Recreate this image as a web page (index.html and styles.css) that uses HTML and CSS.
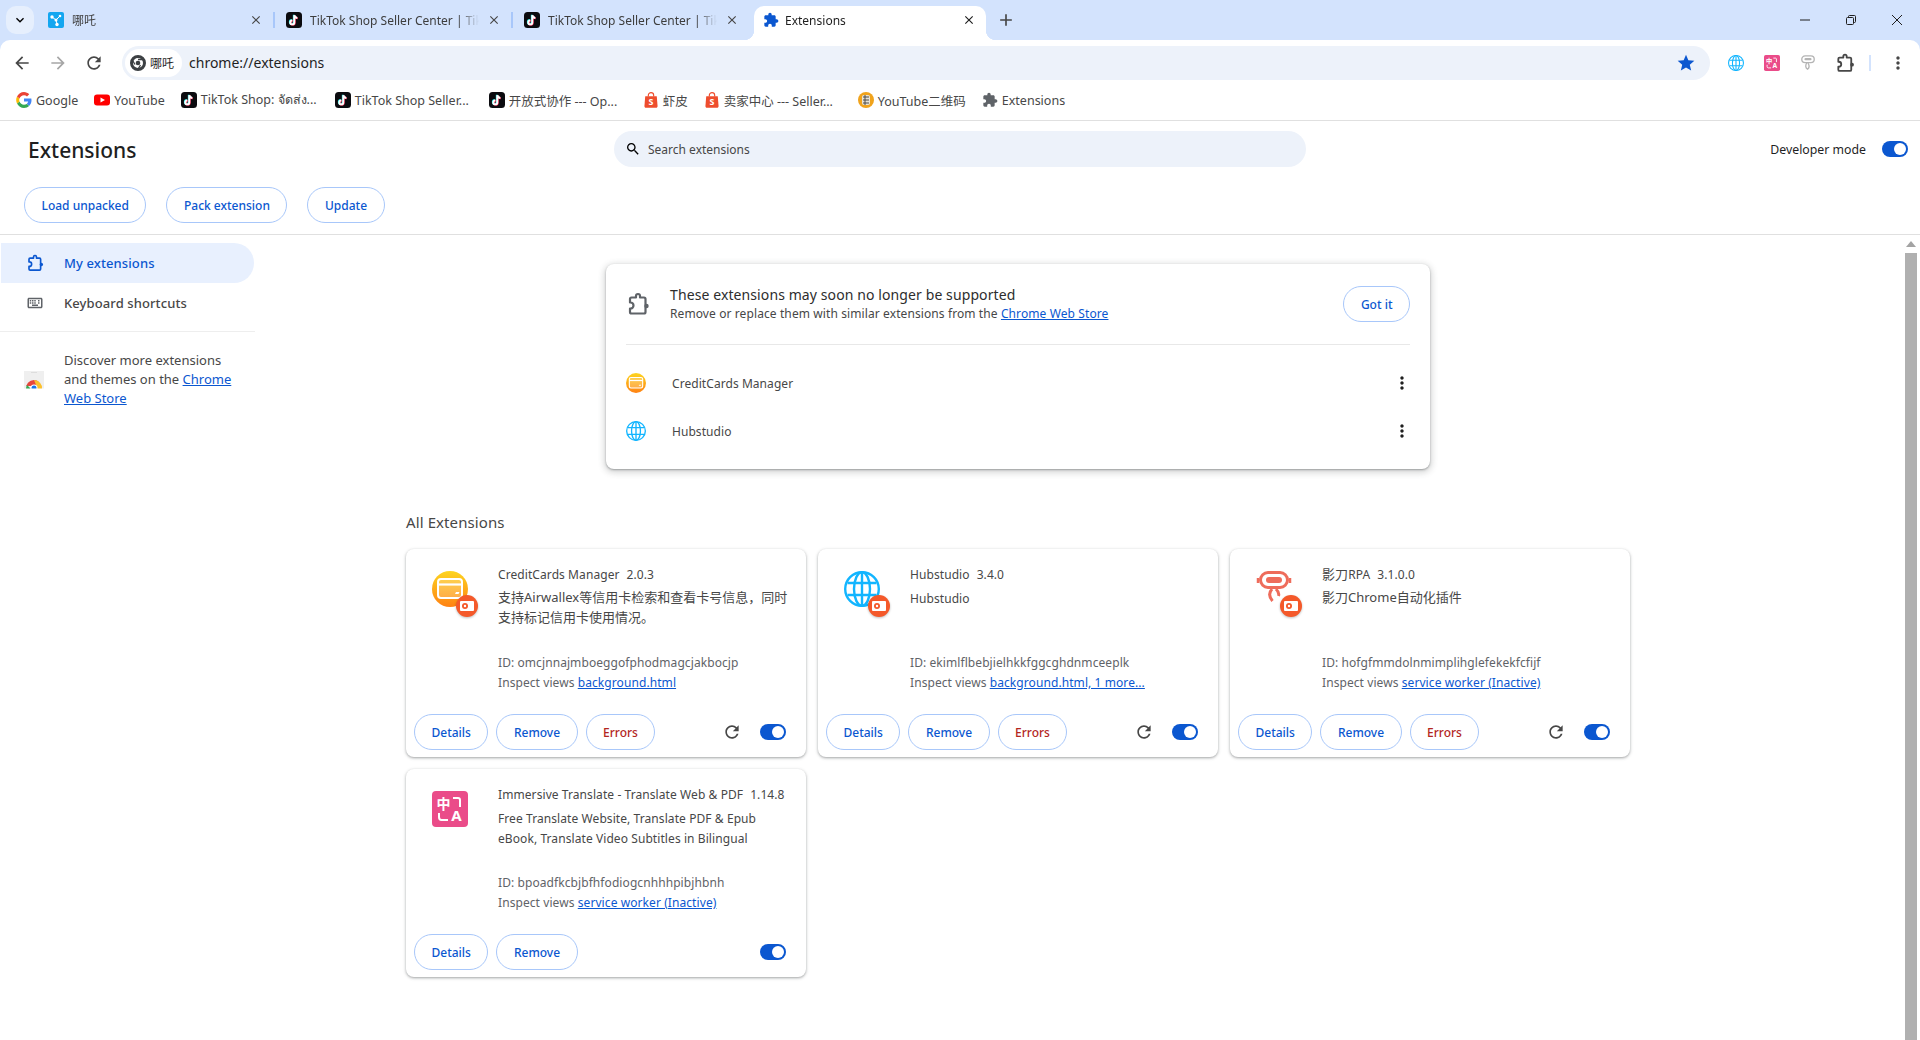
FILE: index.html
```html
<!DOCTYPE html>
<html lang="en">
<head>
  <meta charset="UTF-8">
  <title>Extensions</title>
  <link rel="stylesheet" href="styles.css">
</head>
<body>
  <svg class="defs" width="0" height="0">
    <defs>
      <symbol id="i-puzzle" viewBox="0 0 24 24"><path d="M20.5 11H19V7c0-1.1-.9-2-2-2h-4V3.5C13 2.12 11.88 1 10.5 1S8 2.12 8 3.5V5H4c-1.1 0-1.99.9-1.99 2v3.8H3.5c1.49 0 2.7 1.21 2.7 2.7s-1.21 2.7-2.7 2.7H2V20c0 1.1.9 2 2 2h3.8v-1.5c0-1.49 1.21-2.7 2.7-2.7 1.49 0 2.7 1.21 2.7 2.7V22H17c1.1 0 2-.9 2-2v-4h1.5c1.38 0 2.5-1.12 2.5-2.5S21.88 11 20.5 11z"/></symbol>
      <symbol id="i-outline-puzzle" viewBox="0 0 24 24"><path fill="none" stroke="currentColor" stroke-width="2.2" stroke-linejoin="round" d="M19.5 11.5V7c0-.8-.7-1.5-1.500-1.500h-4V4c0-1.100-.9-2-2-2s-2 .9-2 2v1.500H5.500C4.700 5.500 4 6.200 4 7v3.500h.5c1.600 0 3 1.300 3 3s-1.400 3-3 3H4V20c0 .8.7 1.500 1.500 1.500H18c.8 0 1.500-.7 1.500-1.500v-3.500z"/><circle cx="20.500" cy="14" r="2.200"/></symbol>
      <symbol id="i-close" viewBox="0 0 24 24"><path d="M19 6.410L17.590 5 12 10.590 6.410 5 5 6.410 10.590 12 5 17.590 6.410 19 12 13.410 17.590 19 19 17.590 13.410 12z"/></symbol>
      <symbol id="i-reload" viewBox="0 0 24 24"><path d="M17.650 6.350C16.200 4.900 14.210 4 12 4c-4.420 0-7.990 3.580-7.990 8s3.570 8 7.990 8c3.730 0 6.840-2.550 7.730-6h-2.080c-.82 2.330-3.040 4-5.650 4-3.310 0-6-2.690-6-6s2.690-6 6-6c1.660 0 3.140.69 4.220 1.780L13 11h7V4l-2.350 2.350z"/></symbol>
      <symbol id="i-more" viewBox="0 0 24 24"><path d="M12 8c1.100 0 2-.9 2-2s-.9-2-2-2-2 .9-2 2 .9 2 2 2zm0 2c-1.100 0-2 .9-2 2s.9 2 2 2 2-.9 2-2-.9-2-2-2zm0 6c-1.100 0-2 .9-2 2s.9 2 2 2 2-.9 2-2-.9-2-2-2z"/></symbol>
      <symbol id="i-tiktok" viewBox="0 0 16 16">
        <rect width="16" height="16" rx="3.500" fill="#0b0b0f"/>
        <g fill="none" stroke-width="1.900">
          <path stroke="#25f4ee" d="M7.800 2.800v7.200a2 2 0 1 1-2-2M7.800 2.800c.2 1.500 1.300 2.600 3 2.800"/>
          <path stroke="#fe2c55" d="M8.800 3.600v7.200a2 2 0 1 1-2-2M8.800 3.600c.2 1.500 1.300 2.600 3 2.800"/>
          <path stroke="#fff" d="M8.300 3.200v7.200a2 2 0 1 1-2-2M8.300 3.200c.2 1.500 1.300 2.600 3 2.800"/>
        </g>
      </symbol>
      <symbol id="i-shopee" viewBox="0 0 16 18">
        <path fill="none" stroke="#ee4d2d" stroke-width="1.300" d="M5 5V3.700a3 3 0 0 1 6 0V5"/>
        <path fill="#ee4d2d" d="M1.500 4.800h13l.9 11.300c0 1-.7 1.700-1.600 1.700H2.200c-.9 0-1.600-.7-1.600-1.700z"/>
        <text x="8" y="15" text-anchor="middle" font-size="10" font-weight="700" fill="#fff" font-family="Noto Sans, sans-serif">S</text>
      </symbol>
      <symbol id="i-globe" viewBox="0 0 36 36">
        <g fill="none" stroke="#12b5ff" stroke-width="2.400">
          <circle cx="18" cy="18" r="16.800"/>
          <ellipse cx="18" cy="18" rx="8" ry="16.800"/>
          <path d="M18 1.200v33.600M3.500 12h29M3.500 24h29"/>
        </g>
      </symbol>
      <symbol id="i-card" viewBox="0 0 36 36">
        <defs><linearGradient id="g-card" x1="0" y1="0" x2="0" y2="1"><stop offset="0" stop-color="#fdd520"/><stop offset="1" stop-color="#ff8112"/></linearGradient></defs>
        <circle cx="18" cy="18" r="18" fill="url(#g-card)"/>
        <rect x="6" y="8" width="24" height="19" rx="3" fill="#ffffff" fill-opacity=".22" stroke="#fff" stroke-width="2"/>
        <path d="M6 13.500h24" stroke="#fff" stroke-width="2.200"/>
        <path d="M23 23l1-2h3.500l-1 2z" fill="#fff"/>
      </symbol>
      <symbol id="i-rpa" viewBox="0 0 36 36">
        <g fill="none" stroke="#ee6c5b">
          <rect x="4.500" y="1.500" width="27" height="15" rx="7.500" stroke-width="3"/>
          <rect x="10" y="6" width="16" height="6" rx="3" fill="#ee6c5b" stroke-width="0"/>
          <path stroke-width="3" d="M16 18c-3.500 4-3 8 .5 12M20 18c2 2 3.500 4 2.500 7"/>
          <path stroke-width="2.500" d="M2 7v5M34 7v5"/>
        </g>
      </symbol>
      <symbol id="i-rpa-grey" viewBox="0 0 36 36">
        <g fill="none" stroke="#b4b4b4">
          <rect x="4" y="2" width="28" height="15" rx="7.500" stroke-width="3"/>
          <rect x="10" y="7" width="16" height="5" rx="2.500" fill="#b4b4b4" stroke-width="0"/>
          <path stroke-width="3" d="M15 18c-3 5-3 11 2 14 4-3 4-9 1-14"/>
        </g>
      </symbol>
      <symbol id="i-translate" viewBox="0 0 36 36">
        <rect width="36" height="36" rx="4" fill="#ea4c89"/>
        <text x="11.500" y="18" text-anchor="middle" font-size="14" font-weight="700" fill="#fff" font-family="Noto Sans CJK SC, sans-serif">中</text>
        <text x="24.500" y="30" text-anchor="middle" font-size="15" font-weight="700" fill="#fff" font-family="Noto Sans, sans-serif">A</text>
        <path d="M21 7h5c1 0 2 1 2 2v7M7 22v4c0 1.500 1 3 2.500 3H16" fill="none" stroke="#fff" stroke-width="2"/>
      </symbol>
      <symbol id="i-badge" viewBox="0 0 22 22">
        <circle cx="11" cy="11" r="11" fill="#f4592a"/>
        <rect x="4" y="6" width="14" height="10" rx="1" fill="#fff"/>
        <circle cx="9" cy="11" r="3" fill="#f4592a"/>
        <circle cx="9" cy="11" r="1.200" fill="#fff"/>
      </symbol>
    </defs>
  </svg>

  <div class="tabstrip">
    <div class="tab-search"><svg class="ico-16" viewBox="0 0 24 24"><path d="M16.590 8.590L12 13.170 7.410 8.590 6 10l6 6 6-6z"/></svg></div>
    <div class="tab sep">
      <svg class="favicon" viewBox="0 0 16 16">
        <rect width="16" height="16" rx="2" fill="#13a6f0"/>
        <path d="M4 5l4 3 4-4M8 8l1 4" stroke="#fff" fill="none"/>
        <circle cx="4" cy="5" r="1.700" fill="#fff"/><circle cx="12" cy="4" r="1.300" fill="#fff"/><circle cx="8" cy="8" r="1.500" fill="#fff"/><circle cx="9" cy="12.500" r="1.700" fill="#fff"/>
      </svg>
      <span class="tab-title">哪吒</span>
      <svg class="tab-close"><use href="#i-close"/></svg>
    </div>
    <div class="tab sep">
      <svg class="favicon"><use href="#i-tiktok"/></svg>
      <span class="tab-title">TikTok Shop Seller Center | TikTok</span>
      <svg class="tab-close"><use href="#i-close"/></svg>
    </div>
    <div class="tab">
      <svg class="favicon"><use href="#i-tiktok"/></svg>
      <span class="tab-title">TikTok Shop Seller Center | TikTok</span>
      <svg class="tab-close"><use href="#i-close"/></svg>
    </div>
    <div class="tab tab-active">
      <svg class="favicon fav-blue"><use href="#i-puzzle"/></svg>
      <span class="tab-title">Extensions</span>
      <svg class="tab-close"><use href="#i-close"/></svg>
    </div>
    <div class="tab-new"><svg class="ico-20" viewBox="0 0 24 24"><path d="M19 13h-6v6h-2v-6H5v-2h6V5h2v6h6v2z"/></svg></div>
    <div class="win-controls">
      <div class="win-btn"><svg width="12" height="12" viewBox="0 0 12 12"><path d="M1 6h10" stroke="#1f1f1f"/></svg></div>
      <div class="win-btn"><svg width="12" height="12" viewBox="0 0 12 12" fill="none" stroke="#1f1f1f"><rect x="1.500" y="3.500" width="7" height="7" rx="1"/><path d="M3.500 3.500V2.500a1 1 0 0 1 1-1h5a1 1 0 0 1 1 1v5a1 1 0 0 1-1 1h-1"/></svg></div>
      <div class="win-btn"><svg width="12" height="12" viewBox="0 0 12 12"><path d="M1 1l10 10M11 1L1 11" stroke="#1f1f1f"/></svg></div>
    </div>
  </div>

  <div class="toolbar">
    <div class="nav-btns">
      <svg class="nav-ico" viewBox="0 0 24 24"><path d="M20 11H7.830l5.590-5.590L12 4l-8 8 8 8 1.410-1.410L7.830 13H20v-2z"/></svg>
      <svg class="nav-ico nav-off" viewBox="0 0 24 24"><path d="M12 4l-1.410 1.410L16.170 11H4v2h12.170l-5.580 5.590L12 20l8-8z"/></svg>
      <svg class="nav-ico"><use href="#i-reload"/></svg>
    </div>
    <div class="omnibox">
      <div class="chip">
        <svg width="16" height="16" viewBox="0 0 16 16"><circle cx="8" cy="8" r="6.500" fill="none" stroke="#3c4043" stroke-width="3"/><circle cx="8" cy="8" r="2.300" fill="#3c4043"/><path d="M8 4.500h6M5 9.500L2 4.500M10.500 10l-3 5" stroke="#3c4043" stroke-width="1.300"/></svg>
        <span>哪吒</span>
      </div>
      <span class="url">chrome://extensions</span>
      <svg class="star" viewBox="0 0 24 24"><path d="M12 17.270L18.180 21l-1.640-7.030L22 9.240l-7.190-.61L12 2 9.190 8.630 2 9.240l5.460 4.730L5.820 21z"/></svg>
    </div>
    <div class="actions">
      <svg class="act-ico"><use href="#i-globe"/></svg>
      <svg class="act-ico"><use href="#i-translate"/></svg>
      <svg class="act-ico"><use href="#i-rpa-grey"/></svg>
      <svg class="act-ico act-puzzle"><use href="#i-outline-puzzle"/></svg>
      <span class="act-sep"></span>
      <svg class="act-more"><use href="#i-more"/></svg>
    </div>
  </div>

  <div class="bookmarks">
    <a class="bm">
      <svg class="bm-ico" viewBox="0 0 16 16">
        <path d="M15.500 8.200c0-.6-.1-1.100-.2-1.600H8v3h4.200c-.2 1-.7 1.800-1.500 2.400l2.400 1.900c1.500-1.300 2.400-3.300 2.400-5.700z" fill="#4285f4"/>
        <path d="M8 16c2.100 0 3.900-.7 5.100-1.900L10.700 12c-.7.500-1.600.8-2.700.8-2.100 0-3.800-1.400-4.500-3.300L1 11.500C2.400 14.200 5 16 8 16z" fill="#34a853"/>
        <path d="M3.500 9.500c-.4-1-.4-2.100 0-3L1 4.500c-1.100 2.200-1.100 4.800 0 7z" fill="#fbbc05"/>
        <path d="M8 3.200c1.200 0 2.200.4 3 1.200l2.200-2.200C11.900 1 10.100 0 8 0 5 0 2.400 1.800 1 4.500l2.500 2C4.200 4.600 5.900 3.200 8 3.200z" fill="#ea4335"/>
      </svg>
      <span>Google</span>
    </a>
    <a class="bm">
      <svg class="bm-ico" viewBox="0 0 16 16"><rect y="2.500" width="16" height="11" rx="3" fill="#f00"/><path d="M6.500 5.500v5L11 8z" fill="#fff"/></svg>
      <span>YouTube</span>
    </a>
    <a class="bm bm-long"><svg class="bm-ico"><use href="#i-tiktok"/></svg><span>TikTok Shop: จัดส่ง...</span></a>
    <a class="bm bm-long"><svg class="bm-ico"><use href="#i-tiktok"/></svg><span>TikTok Shop Seller...</span></a>
    <a class="bm bm-long"><svg class="bm-ico"><use href="#i-tiktok"/></svg><span>开放式协作 --- Op...</span></a>
    <a class="bm"><svg class="bm-ico"><use href="#i-shopee"/></svg><span>虾皮</span></a>
    <a class="bm bm-long"><svg class="bm-ico"><use href="#i-shopee"/></svg><span>卖家中心 --- Seller...</span></a>
    <a class="bm">
      <svg class="bm-ico" viewBox="0 0 16 16"><circle cx="8" cy="8" r="8" fill="#f0a31c"/><rect x="4" y="3" width="8" height="10" rx="2" fill="#e7e3d6"/><path d="M5 5h6M5 8h6M5 11h6M7 3v10" stroke="#4a4a4a"/></svg>
      <span>YouTube二维码</span>
    </a>
    <a class="bm"><svg class="bm-ico bm-grey"><use href="#i-puzzle"/></svg><span>Extensions</span></a>
  </div>

  <header class="ext-head">
    <div class="head-top">
      <h1>Extensions</h1>
      <div class="search">
        <svg class="ico-16" viewBox="0 0 24 24"><path d="M15.500 14h-.79l-.28-.27C15.410 12.590 16 11.110 16 9.500 16 5.910 13.090 3 9.500 3S3 5.910 3 9.500 5.910 16 9.500 16c1.610 0 3.090-.59 4.230-1.570l.27.28v.79l5 4.990L20.490 19l-4.990-5zm-6 0C7.010 14 5 11.990 5 9.500S7.010 5 9.500 5 14 7.010 14 9.500 11.990 14 9.500 14z"/></svg>
        <span>Search extensions</span>
      </div>
      <div class="devmode">
        <span>Developer mode</span>
        <span class="toggle"></span>
      </div>
    </div>
    <div class="head-btns">
      <a class="btn">Load unpacked</a>
      <a class="btn">Pack extension</a>
      <a class="btn">Update</a>
    </div>
  </header>

  <div class="page">
    <nav class="sidebar">
      <a class="side-item side-active"><svg class="side-ico"><use href="#i-outline-puzzle"/></svg>My extensions</a>
      <a class="side-item"><svg class="side-ico side-kbd" viewBox="0 0 24 24"><path d="M20 7v10H4V7h16m0-2H4c-1.100 0-1.990.9-1.990 2L2 17c0 1.100.9 2 2 2h16c1.100 0 2-.9 2-2V7c0-1.100-.9-2-2-2zm-9 3h2v2h-2zm0 3h2v2h-2zM8 8h2v2H8zm0 3h2v2H8zm-3 0h2v2H5zm0-3h2v2H5zm3 6h8v2H8zm8-3h2v2h-2zm0-3h2v2h-2z"/></svg>Keyboard shortcuts</a>
      <div class="side-promo">
        <svg class="promo-ico" viewBox="0 0 20 18">
          <rect width="20" height="18" fill="#efefef"/>
          <rect x="7" y="1" width="6" height="1" fill="#ddd"/>
          <path d="M2 18a8 8 0 0 1 8-9 8 8 0 0 1 5 2l-3 4H2z" fill="#e8453c"/>
          <path d="M10 9a8 8 0 0 1 8 9h-5l-1-4z" fill="#fbc02d"/>
          <path d="M2 18a8 8 0 0 1 1-4l4 4z" fill="#34a853"/>
          <circle cx="10" cy="17" r="3.500" fill="#fff"/><circle cx="10" cy="17" r="2.500" fill="#1a73e8"/>
          <rect y="17.500" width="20" height=".5" fill="#fff"/>
        </svg>
        <p>Discover more extensions and themes on the <a class="link">Chrome Web Store</a></p>
      </div>
    </nav>

    <main class="main">
      <section class="warn-card">
        <div class="warn-top">
          <svg class="warn-ico"><use href="#i-outline-puzzle"/></svg>
          <div class="warn-text">
            <div class="warn-title">These extensions may soon no longer be supported</div>
            <div class="warn-sub">Remove or replace them with similar extensions from the <a class="link">Chrome Web Store</a></div>
          </div>
          <a class="btn btn-got">Got it</a>
        </div>
        <div class="warn-list">
          <div class="warn-row">
            <svg class="warn-ext"><use href="#i-card"/></svg>
            <span>CreditCards Manager</span>
            <svg class="warn-more"><use href="#i-more"/></svg>
          </div>
          <div class="warn-row">
            <svg class="warn-ext"><use href="#i-globe"/></svg>
            <span>Hubstudio</span>
            <svg class="warn-more"><use href="#i-more"/></svg>
          </div>
        </div>
      </section>

      <h2 class="all-title">All Extensions</h2>

      <div class="ext-grid">
        <article class="ext-card">
          <div class="ext-body">
            <div class="ext-icon"><svg class="ext-img"><use href="#i-card"/></svg><svg class="ext-badge"><use href="#i-badge"/></svg></div>
            <div class="ext-info">
              <div class="ext-name">CreditCards Manager<span class="ext-ver">2.0.3</span></div>
              <div class="ext-desc ext-desc-cjk">支持Airwallex等信用卡检索和查看卡号信息，同时支持标记信用卡使用情况。</div>
              <div class="ext-id">ID: omcjnnajmboeggofphodmagcjakbocjp</div>
              <div class="ext-views">Inspect views <a class="link">background.html</a></div>
            </div>
          </div>
          <div class="ext-foot">
            <a class="btn">Details</a><a class="btn">Remove</a><a class="btn btn-err">Errors</a>
            <svg class="ext-reload"><use href="#i-reload"/></svg>
            <span class="toggle"></span>
          </div>
        </article>

        <article class="ext-card">
          <div class="ext-body">
            <div class="ext-icon"><svg class="ext-img"><use href="#i-globe"/></svg><svg class="ext-badge"><use href="#i-badge"/></svg></div>
            <div class="ext-info">
              <div class="ext-name">Hubstudio<span class="ext-ver">3.4.0</span></div>
              <div class="ext-desc">Hubstudio</div>
              <div class="ext-id">ID: ekimlflbebjielhkkfggcghdnmceeplk</div>
              <div class="ext-views">Inspect views <a class="link">background.html, 1 more...</a></div>
            </div>
          </div>
          <div class="ext-foot">
            <a class="btn">Details</a><a class="btn">Remove</a><a class="btn btn-err">Errors</a>
            <svg class="ext-reload"><use href="#i-reload"/></svg>
            <span class="toggle"></span>
          </div>
        </article>

        <article class="ext-card">
          <div class="ext-body">
            <div class="ext-icon"><svg class="ext-img"><use href="#i-rpa"/></svg><svg class="ext-badge"><use href="#i-badge"/></svg></div>
            <div class="ext-info">
              <div class="ext-name"><span class="cjk">影刀</span>RPA<span class="ext-ver">3.1.0.0</span></div>
              <div class="ext-desc ext-desc-cjk">影刀Chrome自动化插件</div>
              <div class="ext-id">ID: hofgfmmdolnmimplihglefekekfcfijf</div>
              <div class="ext-views">Inspect views <a class="link">service worker (Inactive)</a></div>
            </div>
          </div>
          <div class="ext-foot">
            <a class="btn">Details</a><a class="btn">Remove</a><a class="btn btn-err">Errors</a>
            <svg class="ext-reload"><use href="#i-reload"/></svg>
            <span class="toggle"></span>
          </div>
        </article>

        <article class="ext-card">
          <div class="ext-body">
            <div class="ext-icon"><svg class="ext-img"><use href="#i-translate"/></svg></div>
            <div class="ext-info">
              <div class="ext-name">Immersive Translate - Translate Web &amp; PDF<span class="ext-ver">1.14.8</span></div>
              <div class="ext-desc">Free Translate Website, Translate PDF &amp; Epub eBook, Translate Video Subtitles in Bilingual</div>
              <div class="ext-id">ID: bpoadfkcbjbfhfodiogcnhhhpibjhbnh</div>
              <div class="ext-views">Inspect views <a class="link">service worker (Inactive)</a></div>
            </div>
          </div>
          <div class="ext-foot">
            <a class="btn">Details</a><a class="btn">Remove</a>
            <span class="toggle toggle-end"></span>
          </div>
        </article>
      </div>
    </main>

    <div class="scrollbar">
      <span class="scroll-up"></span>
      <span class="scroll-thumb"></span>
    </div>
  </div>
</body>
</html>
```

FILE: styles.css
```css
html, body {
    margin: 0;
    height: 100%;
    overflow: hidden;
}

body {
    display: flex;
    flex-direction: column;
    background: #d3e3fd;
    color: #1f1f1f;
    font-family: "Noto Sans", "Noto Sans CJK SC", sans-serif;
    font-size: 13px;
}

svg {
    flex: none;
    display: block;
}

.defs {
    position: absolute;
}

.ico-16 {
    width: 16px;
    height: 16px;
}

.ico-20 {
    width: 20px;
    height: 20px;
    fill: #474747;
}

/* tab strip */
.tabstrip {
    display: flex;
    align-items: flex-end;
    height: 40px;
    flex: none;
    padding-left: 6px;
}

.tab-search {
    display: flex;
    align-items: center;
    justify-content: center;
    width: 28px;
    height: 28px;
    margin: 0 2px 6px 0;
    border-radius: 10px;
    background: #e6effd;
}

.tab {
    position: relative;
    display: flex;
    align-items: center;
    width: 238px;
    height: 34px;
    box-sizing: border-box;
    padding: 0 11px 6px 12px;
    font-size: 12px;
    color: #3d3d3d;
}

.sep::after {
    content: "";
    position: absolute;
    right: -1px;
    top: 6px;
    width: 2px;
    height: 16px;
    background: #a8c7fa;
}

.favicon {
    width: 16px;
    height: 16px;
    margin-right: 8px;
}

.tab-title {
    flex: 1;
    overflow: hidden;
    white-space: nowrap;
    -webkit-mask-image: linear-gradient(90deg, #000 88%, transparent);
    mask-image: linear-gradient(90deg, #000 88%, transparent);
}

.tab-close {
    width: 14px;
    height: 14px;
    margin-left: 8px;
    fill: #474747;
}

.tab-active {
    width: 232px;
    margin-left: 4px;
    padding: 0 9px 6px;
    background: #fff;
    border-radius: 10px 10px 0 0;
    color: #1f1f1f;
}

.tab-active .tab-close {
    fill: #1f1f1f;
    margin-right: 1px;
}

.tab-active::before,
.tab-active::after {
    content: "";
    position: absolute;
    bottom: 0;
    width: 10px;
    height: 10px;
}

.tab-active::before {
    left: -10px;
    background: radial-gradient(circle at 0 0, transparent 10px, #fff 10.500px);
}

.tab-active::after {
    right: -10px;
    background: radial-gradient(circle at 100% 0, transparent 10px, #fff 10.500px);
}

.fav-blue {
    fill: #0b57d0;
    width: 16px;
    height: 16px;
    margin-right: 6px;
}

.tab-new {
    display: flex;
    align-items: center;
    justify-content: center;
    width: 28px;
    height: 28px;
    margin: 0 0 6px 6px;
}

.win-controls {
    display: flex;
    margin-left: auto;
    align-self: flex-start;
}

.win-btn {
    display: flex;
    align-items: center;
    justify-content: center;
    width: 46px;
    height: 40px;
}

/* toolbar */
.toolbar {
    display: flex;
    align-items: center;
    height: 44px;
    flex: none;
    box-sizing: border-box;
    padding: 6px 0 4px 8px;
    background: #fff;
    border-radius: 10px 10px 0 0;
}

.nav-btns {
    display: flex;
    gap: 16px;
    padding-left: 4px;
    width: 114px;
    box-sizing: border-box;
}

.nav-ico {
    width: 20px;
    height: 20px;
    fill: #474747;
}

.nav-off {
    fill: #a6a6a6;
}

.omnibox {
    display: flex;
    align-items: center;
    width: 1588px;
    height: 34px;
    padding-left: 3px;
    box-sizing: border-box;
    border-radius: 17px;
    background: #edf2fa;
}

.chip {
    display: flex;
    align-items: center;
    gap: 4px;
    height: 28px;
    padding: 0 8px 0 5px;
    border-radius: 14px;
    background: #fff;
    font-size: 12px;
}

.url {
    margin: 0 0 2px 7px;
    font-size: 14px;
}

.star {
    width: 20px;
    height: 20px;
    margin-left: auto;
    margin-right: 14px;
    fill: #0b57d0;
}

.actions {
    display: flex;
    align-items: center;
    padding-left: 18px;
}

.act-ico {
    width: 16px;
    height: 16px;
    margin-right: 20px;
}

.act-puzzle {
    width: 20px;
    height: 20px;
    margin-left: -1px;
    margin-right: 14px;
    color: #474747;
    fill: #474747;
}

.act-sep {
    width: 2px;
    height: 16px;
    background: #d3e3fd;
}

.act-more {
    width: 20px;
    height: 20px;
    margin-left: 17px;
    fill: #474747;
}

/* bookmarks */
.bookmarks {
    display: flex;
    align-items: center;
    height: 37px;
    flex: none;
    box-sizing: border-box;
    padding: 0 0 4px 8px;
    background: #fff;
    border-bottom: 1px solid #e0e0e0;
    font-size: 12.5px;
    color: #474747;
}

.bm {
    display: flex;
    align-items: center;
    gap: 4px;
    padding: 0 8px;
    white-space: nowrap;
}

.bm-long {
    width: 154px;
    box-sizing: border-box;
}

.bm-ico {
    width: 16px;
    height: 16px;
}

.bm-grey {
    fill: #5f6368;
}

/* extensions header */
.ext-head {
    flex: none;
    height: 114px;
    box-sizing: border-box;
    background: #fff;
    border-bottom: 1px solid #e0e0e0;
}

.head-top {
    display: grid;
    grid-template-columns: 1fr 692px 1fr;
    align-items: center;
    padding-top: 10px;
}

h1 {
    margin: 2px 0 0 28px;
    font-size: 21px;
    font-weight: 500;
    color: #1f1f1f;
}

.search {
    display: flex;
    align-items: center;
    gap: 7px;
    height: 36px;
    padding-left: 11px;
    border-radius: 18px;
    background: #edf2fa;
    font-size: 12px;
    color: #474747;
}

.devmode {
    display: flex;
    align-items: center;
    justify-content: flex-end;
    gap: 16px;
    padding-right: 12px;
    font-size: 12.3px;
    color: #1f1f1f;
}

.toggle {
    position: relative;
    display: block;
    flex: none;
    width: 26px;
    height: 16px;
    border-radius: 8px;
    background: #0b57d0;
}

.toggle::after {
    content: "";
    position: absolute;
    right: 2px;
    top: 2px;
    width: 12px;
    height: 12px;
    border-radius: 50%;
    background: #fff;
}

.toggle-end {
    margin-left: auto;
}

.btn {
    display: inline-flex;
    align-items: center;
    justify-content: center;
    height: 36px;
    box-sizing: border-box;
    padding: 0 16.5px;
    border: 1px solid #a8c7fa;
    border-radius: 18px;
    background: #fff;
    color: #0b57d0;
    font-size: 12px;
    font-weight: 500;
    white-space: nowrap;
}

.btn-err {
    color: #b3261e;
}

.head-btns {
    display: flex;
    gap: 20px;
    padding: 20px 0 0 24px;
}

/* page body */
.page {
    display: flex;
    flex: 1;
    min-height: 0;
    background: #fff;
}

.sidebar {
    width: 255px;
    flex: none;
    padding-top: 8px;
}

.side-item {
    display: flex;
    align-items: center;
    gap: 20px;
    height: 40px;
    width: 253px;
    box-sizing: border-box;
    margin-left: 1px;
    padding: 0 0 1px 25px;
    border-radius: 0 20px 20px 0;
    font-weight: 500;
    letter-spacing: 0.1px;
    color: #474747;
}

.side-active {
    background: #e8f0fe;
    color: #0b57d0;
}

.side-ico {
    width: 18px;
    height: 18px;
    fill: currentColor;
}

.side-kbd {
    fill: #5f6368;
}

.side-promo {
    display: flex;
    align-items: center;
    gap: 20px;
    margin-top: 8px;
    padding: 19px 16px 0 24px;
    border-top: 1px solid #eee;
    color: #474747;
    line-height: 19px;
}

.side-promo p {
    margin: 0;
}

.promo-ico {
    width: 20px;
    height: 18px;
}

.link {
    color: #0b57d0;
    text-decoration: underline;
}

.main {
    flex: 1;
    min-width: 0;
    padding: 29px 0 0 151px;
}

/* warning card */
.warn-card {
    box-sizing: border-box;
    width: 824px;
    height: 205px;
    margin-left: 200px;
    padding: 0 20px;
    border-radius: 8px;
    background: #fff;
    box-shadow: 0 1px 2px rgba(60, 64, 67, 0.4), 0 2px 6px 2px rgba(60, 64, 67, 0.2);
}

.warn-top {
    display: flex;
    align-items: center;
    height: 80px;
    border-bottom: 1px solid #e8e8e8;
}

.warn-ico {
    width: 24px;
    height: 24px;
    margin-right: 20px;
    color: #5f6368;
    fill: #5f6368;
}

.warn-title {
    font-size: 14px;
    line-height: 20px;
    letter-spacing: 0.1px;
    color: #2d2d2d;
}

.warn-sub {
    font-size: 12px;
    line-height: 18px;
    letter-spacing: 0.1px;
    color: #474747;
}

.btn-got {
    margin-left: auto;
}

.warn-list {
    padding-top: 14px;
}

.warn-row {
    display: flex;
    align-items: center;
    height: 48px;
    font-size: 12px;
    letter-spacing: 0.06px;
    color: #474747;
}

.warn-ext {
    width: 20px;
    height: 20px;
    margin-right: 26px;
}

.warn-more {
    width: 20px;
    height: 20px;
    margin-left: auto;
    margin-right: -2px;
    fill: #1f1f1f;
}

.all-title {
    margin: 43px 0 0;
    height: 20px;
    line-height: 20px;
    font-size: 15px;
    font-weight: 400;
    letter-spacing: 0.1px;
    color: #474747;
}

/* extension cards */
.ext-grid {
    display: grid;
    grid-template-columns: repeat(3, 400px);
    gap: 12px;
    margin-top: 17px;
}

.ext-card {
    display: flex;
    flex-direction: column;
    height: 208px;
    border-radius: 8px;
    background: #fff;
    box-shadow: 0 1px 2px rgba(60, 64, 67, 0.3), 0 1px 3px 1px rgba(60, 64, 67, 0.15);
}

.ext-body {
    display: flex;
    flex: 1;
    padding: 16px 16px 0 26px;
}

.ext-icon {
    position: relative;
    width: 36px;
    height: 36px;
    margin: 6px 30px 0 0;
}

.ext-img {
    width: 36px;
    height: 36px;
}

.ext-badge {
    position: absolute;
    left: 24px;
    top: 24px;
    width: 22px;
    height: 22px;
    filter: drop-shadow(0 1px 1px rgba(0, 0, 0, 0.25));
}

.ext-info {
    flex: 1;
    min-width: 0;
    font-size: 12px;
    letter-spacing: 0.08px;
    color: #5f6368;
}

.ext-name {
    height: 20px;
    line-height: 20px;
    color: #474747;
}

.cjk {
    font-size: 13px;
    line-height: 1;
}

.ext-ver {
    margin-left: 7px;
}

.ext-desc {
    height: 40px;
    margin-top: 4px;
    line-height: 20px;
    color: #474747;
}

.ext-desc-cjk {
    height: 42px;
    margin-top: 2px;
    font-size: 13px;
    letter-spacing: 0;
}

.ext-id {
    margin-top: 23px;
    line-height: 21px;
}

.ext-views {
    line-height: 20px;
}

.ext-foot {
    display: flex;
    align-items: center;
    gap: 8px;
    padding: 0 20px 7px 8px;
}

.ext-reload {
    width: 20px;
    height: 20px;
    margin-left: auto;
    margin-right: 10px;
    fill: #474747;
}

/* fake scrollbar */
.scrollbar {
    display: flex;
    flex-direction: column;
    align-items: center;
    width: 18px;
    flex: none;
    background: #fff;
}

.scroll-up {
    flex: none;
    width: 0;
    height: 0;
    margin: 6px 0 6px;
    border-left: 5px solid transparent;
    border-right: 5px solid transparent;
    border-bottom: 6px solid #a3a3a3;
}

.scroll-thumb {
    flex: 1;
    width: 12px;
    background: #b0b0b0;
}
```
